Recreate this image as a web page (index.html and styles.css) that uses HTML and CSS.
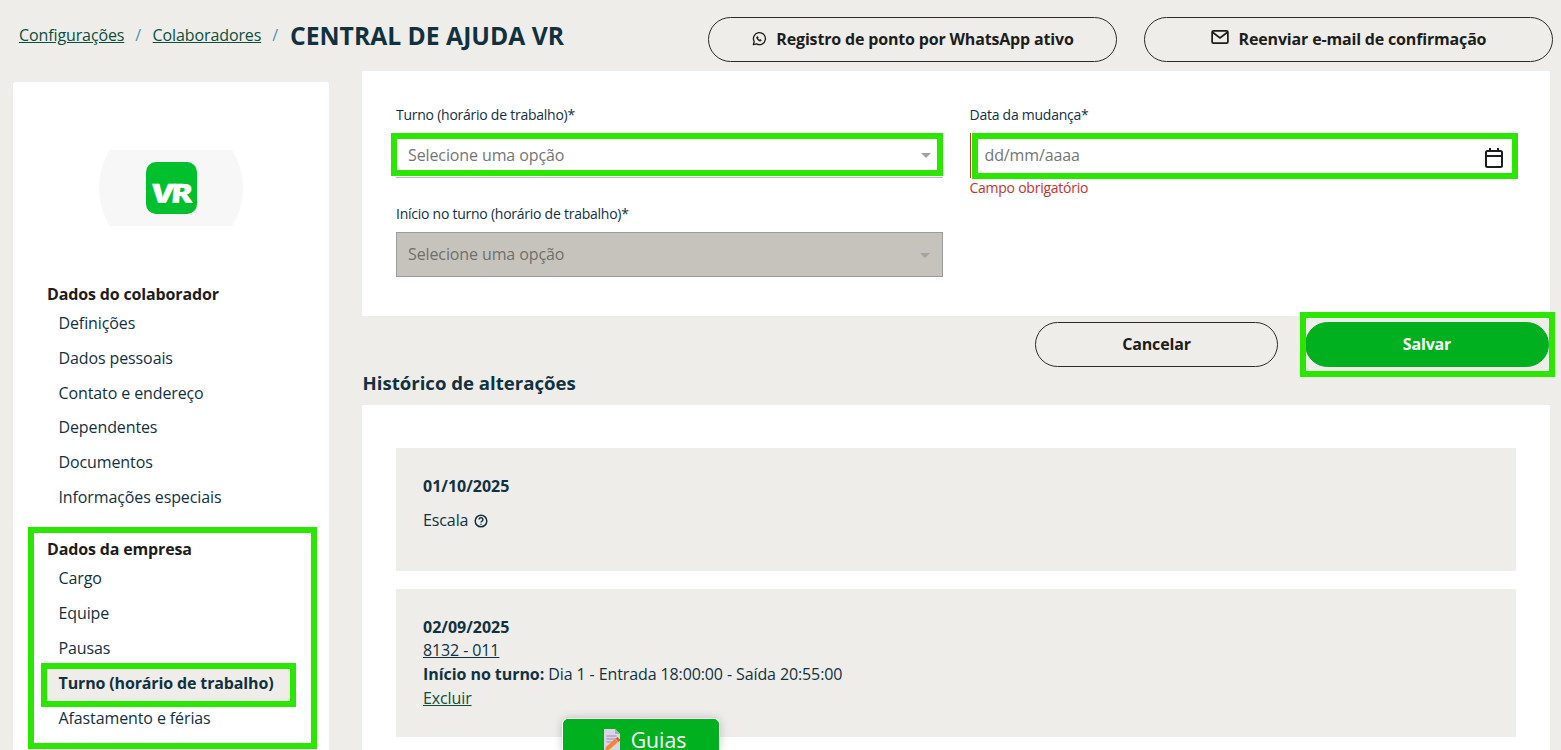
FILE: index.html
```html
<!DOCTYPE html>
<html lang="pt-BR">
<head>
<meta charset="utf-8">
<title>Central de Ajuda VR</title>
<link rel="stylesheet" href="styles.css">
</head>
<body>
<header class="top">
  <nav class="crumbs">
    <a href="#">Configurações</a><span class="sep">/</span><a href="#">Colaboradores</a><span class="sep">/</span><h1>CENTRAL DE AJUDA VR</h1>
  </nav>
  <div class="top-actions">
    <button class="btn btn-top"><svg class="ico" viewBox="0 0 24 24" fill="none" stroke="#1d1d1b" stroke-width="2"><path d="M3.500 20.500l1.300-4.700A9 9 0 1 1 8.300 19.300z" stroke-linejoin="round"/><path d="M9 8.500c-.8.800-.7 2 .3 3.500 1.100 1.700 2.500 2.900 4.200 3.100 1 .1 1.700-.5 2-1.300l-2-1.200-.9.800c-1-.4-1.900-1.300-2.500-2.400l.7-.9L9.800 8.300z" stroke-width="1.200" fill="#1d1d1b"/></svg>Registro de ponto por WhatsApp ativo</button>
    <button class="btn btn-top"><svg class="ico ico-mail" viewBox="0 0 20 16" fill="none" stroke="#1d1d1b" stroke-width="2"><rect x="1" y="1" width="18" height="14" rx="1.500"/><path d="M1.500 2.500L10 9l8.500-6.500"/></svg>Reenviar e-mail de confirmação</button>
  </div>
</header>

<div class="layout">
  <aside class="side">
    <div class="logo-wrap">
      <div class="logo-circle"></div>
      <div class="logo"><span>VR</span></div>
    </div>
    <section class="group first">
      <h3>Dados do colaborador</h3>
      <a class="item" href="#">Definições</a>
      <a class="item" href="#">Dados pessoais</a>
      <a class="item" href="#">Contato e endereço</a>
      <a class="item" href="#">Dependentes</a>
      <a class="item" href="#">Documentos</a>
      <a class="item" href="#">Informações especiais</a>
    </section>
    <section class="group second">
      <span class="hl hl-group"></span>
      <h3>Dados da empresa</h3>
      <a class="item" href="#">Cargo</a>
      <a class="item" href="#">Equipe</a>
      <a class="item" href="#">Pausas</a>
      <a class="item active" href="#">Turno (horário de trabalho)<span class="hl hl-active"></span></a>
      <a class="item" href="#">Afastamento e férias</a>
    </section>
  </aside>

  <main class="content">
    <form class="panel form">
      <div class="col">
        <div class="field">
          <label>Turno (horário de trabalho)*</label>
          <div class="control select"><span class="ph">Selecione uma opção</span><i class="caret"></i><span class="hl hl-select"></span></div>
        </div>
        <div class="field field-2">
          <label>Início no turno (horário de trabalho)*</label>
          <div class="control select disabled"><span class="ph">Selecione uma opção</span><i class="caret"></i></div>
        </div>
      </div>
      <div class="col">
        <div class="field">
          <label>Data da mudança*</label>
          <div class="control date"><span class="ph">dd/mm/aaaa</span>
            <svg class="cal" viewBox="0 0 18 20" fill="none" stroke="#1d1d1b" stroke-width="2"><rect x="1" y="3" width="16" height="16" rx="1.500"/><path d="M1 8h16M5 0v4M13 0v4"/></svg>
            <span class="hl hl-date"></span></div>
          <p class="error">Campo obrigatório</p>
        </div>
      </div>
    </form>

    <div class="actions">
      <button class="btn btn-cancel">Cancelar</button>
      <button class="btn btn-save">Salvar<span class="hl hl-save"></span></button>
    </div>

    <h2 class="hist-title">Histórico de alterações</h2>

    <section class="panel hist">
      <article class="entry entry-1">
        <strong class="line">01/10/2025</strong>
        <p class="line escala">Escala <svg class="help" viewBox="0 0 14 14" fill="none" stroke="#12313f" stroke-width="1.500"><circle cx="7" cy="7" r="5.800"/><path d="M5.100 5.600a1.900 1.900 0 1 1 2.900 1.600c-.7.400-1 .7-1 1.400"/><path d="M7 9.700v1.100"/></svg></p>
      </article>
      <article class="entry">
        <strong class="line">02/09/2025</strong>
        <a class="line code" href="#">8132 - 011</a>
        <p class="line"><b>Início no turno:</b> Dia 1 - Entrada 18:00:00 - Saída 20:55:00</p>
        <a class="line del" href="#">Excluir</a>
      </article>
    </section>
  </main>
</div>

<div class="guias">
  <svg class="guias-ico" viewBox="0 0 18 24"><path d="M1 0h11l5 5v19H1z" fill="#dcd3e6"/><path d="M12 0l5 5h-5z" fill="#b6a9c6"/><path d="M3.500 7h10M3.500 10h10M3.500 13h7" stroke="#9c90ad" stroke-width="1"/><path d="M2 22l1-4 9-8 3 3-9 8z" fill="#f58433"/><path d="M12.500 9.500l2-1.500 3 3-2 2z" fill="#f0503c"/></svg>
  <span>Guias</span>
</div>
</body>
</html>
```
FILE: styles.css
```css
* { box-sizing: border-box; }
html, body { margin: 0; height: 750px; overflow: hidden; }
body {
  background: #eeede9;
  color: #12313f;
  font-family: "Open Sans", "Liberation Sans", sans-serif;
  font-size: 16px;
  letter-spacing: -.11px;
  position: relative;
}
p, h1, h2, h3 { margin: 0; }

.hl { position: absolute; border: 6px solid #2ae600; pointer-events: none; }

.top { display: flex; justify-content: space-between; height: 71px; padding: 17px 8px 0 19px; }
.crumbs { display: flex; align-items: center; height: 36px; }
.crumbs a { color: #0b4f3c; text-decoration: underline; }
.sep { color: #4b93b5; margin: 0 11.5px 0 11px; }
.crumbs h1 { font-size: 24.7px; font-weight: 700; color: #12313f; letter-spacing: 0; margin-left: .5px; }
.top-actions { display: flex; gap: 27px; }

.btn {
  font-family: inherit; font-size: 16px; font-weight: 700; color: #1d1d1b;
  letter-spacing: -.17px;
  background: transparent; border: 1px solid #2b2b2b; border-radius: 23px;
  height: 45px; display: flex; align-items: center; justify-content: center;
  position: relative; padding: 0 0 2px;
}
.btn-top { width: 409px; gap: 9px; }
.ico { width: 16px; height: 16px; }
.ico-mail { width: 18px; height: 14px; margin-top: -4px; margin-right: 1px; }

.layout { display: flex; gap: 33px; padding-left: 13px; }

.side { width: 316px; height: 700px; margin-top: 11px; background: #fff; border-radius: 3px; padding: 68px 39px 0 34px; flex: none; }
.logo-wrap { width: 144px; height: 76px; margin-left: 52px; position: relative; overflow: hidden; }
.logo-circle { position: absolute; left: 0; top: -34px; width: 144px; height: 144px; border-radius: 50%; background: #f7f7f7; }
.logo { position: absolute; left: 47px; top: 12px; width: 51px; height: 52px; border-radius: 10px; background: #00c12d; display: flex; align-items: center; justify-content: center; }
.logo span { color: #fff; font-weight: 800; font-size: 27px; letter-spacing: -3px; transform: translate(-1px, 4px) scaleX(1.25) skewX(-4deg); }

.group { position: relative; }
.group.first { margin-top: 57px; }
.group.second { margin-top: 24px; }
.group h3 { font-size: 16px; font-weight: 700; color: #1d1d1b; line-height: 22.6px; letter-spacing: -.15px; }
.item { display: flex; align-items: center; height: 34.8px; padding-left: 11.5px; color: #12313f; text-decoration: none; position: relative; }
.item.active { background: #eeede9; font-weight: 700; height: 32px; margin: 3.4px 0 -.6px; padding-bottom: 4px; letter-spacing: -.14px; }
.hl-group { left: -19px; right: -27px; top: -11px; bottom: -14px; }
.hl-active { left: -6px; right: -6px; top: -6px; bottom: -6px; }

.content { width: 1188px; flex: none; }
.panel { background: #fff; border-radius: 2px; }

.form { height: 245px; padding: 34px 34px 0; display: flex; gap: 27px; }
.col { flex: 1; }
.field label { display: block; font-size: 14px; line-height: 20px; letter-spacing: -.25px; color: #12313f; height: 28px; }
.field-2 { margin-top: 26px; }
.control { height: 45px; position: relative; display: flex; align-items: center; padding-left: 12px; }
.ph { color: #757575; }
.select { border-bottom: 1px solid #b9bcb8; }
.select .caret { position: absolute; right: 12px; top: 20px; border: 5.5px solid transparent; border-top: 5px solid #a3a3a3; border-bottom: 0; }
.select.disabled { background: #c6c3bc; border: 1px solid #9a9c9c; padding: 0 0 2px 11px; }
.select.disabled .ph { color: #6f6f6c; }
.date { border-left: 1px solid #c8322b; padding: 0 0 2px 14px; }
.cal { position: absolute; right: 13px; top: 15px; width: 18px; height: 20px; }
.error { font-size: 14px; line-height: 20px; letter-spacing: -.25px; color: #c8322b; }
.hl-select { left: -5px; right: 0; top: 0; bottom: 1px; }
.hl-date { left: 1px; right: -2px; top: 0; bottom: -1px; }

.actions { display: flex; justify-content: flex-end; gap: 27px; margin-top: 6px; padding-right: 1px; }
.btn-cancel { width: 243px; }
.btn-save { width: 244px; background: #00b01f; border-color: #00b01f; color: #fff; }
.hl-save { left: -6px; right: -7px; top: -11px; bottom: -11px; }

.hist-title { font-size: 18.6px; font-weight: 700; line-height: 24px; letter-spacing: 0; margin: 4px 0 10px .5px; color: #12313f; }
.hist { padding: 43px 34px 0; height: 400px; }
.entry { background: #eeede9; padding: 26px 27px 27px; margin-bottom: 18px; }
.entry-1 { padding-bottom: 39px; }
.line { display: block; line-height: 24px; }
strong, b { letter-spacing: 0; }
b { letter-spacing: -.06px; }
.escala { margin-top: 10px; display: flex; align-items: center; gap: 6px; }
.help { width: 14px; height: 14px; margin-top: 1px; }
.code { color: #12313f; text-decoration: underline; line-height: 23px; }
.del { color: #0b4f3c; text-decoration: underline; }

.guias {
  position: absolute; left: 562px; top: 718px; width: 158px; height: 32px;
  background: #00b01f; border: 1px solid #fff; border-bottom: 0; border-radius: 6px 6px 0 0;
  box-shadow: 0 0 10px rgba(0, 0, 0, .2);
  display: flex; justify-content: center; align-items: flex-start; gap: 10px;
  padding: 10px 0 0 7px;
  color: #fff; font-size: 21.2px; line-height: 21px; letter-spacing: 0;
}
.guias-ico { width: 18px; height: 24px; flex: none; }
```
